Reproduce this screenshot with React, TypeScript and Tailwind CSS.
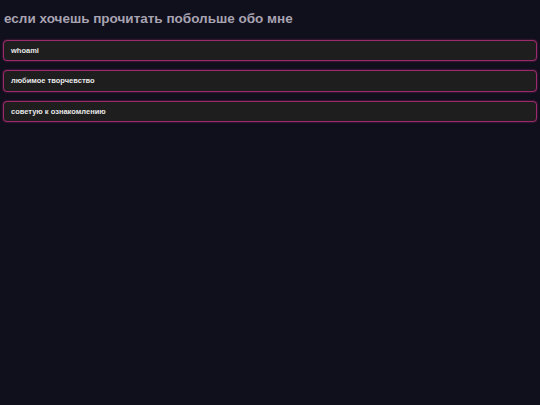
import React from "react";

const sections = ["whoami", "любимое творчевство", "советую к ознакомлению"];

export default function App() {
    return (
        <div className="w-full min-h-screen bg-[#100f1c] px-[3px] pt-[10px] font-['Liberation_Sans',Arial,sans-serif]">
            <h1 className="text-[13.5px] leading-[18px] font-bold text-[#a8a3b1] pl-px">если хочешь прочитать побольше обо мне</h1>

            <div className="mt-[11.5px] flex flex-col gap-[9px]">
                {sections.map((title) => (
                    <div
                        key={title}
                        className="h-[21.5px] flex items-center px-[7px] bg-[#1e1e1e] border border-[#9a2a6c] rounded-[4px] shadow-[0_0_2px_#8a2460]"
                    >
                        <span className="text-[7.5px] font-bold text-[#e8e8e8]">{title}</span>
                    </div>
                ))}
            </div>
        </div>
    );
}
